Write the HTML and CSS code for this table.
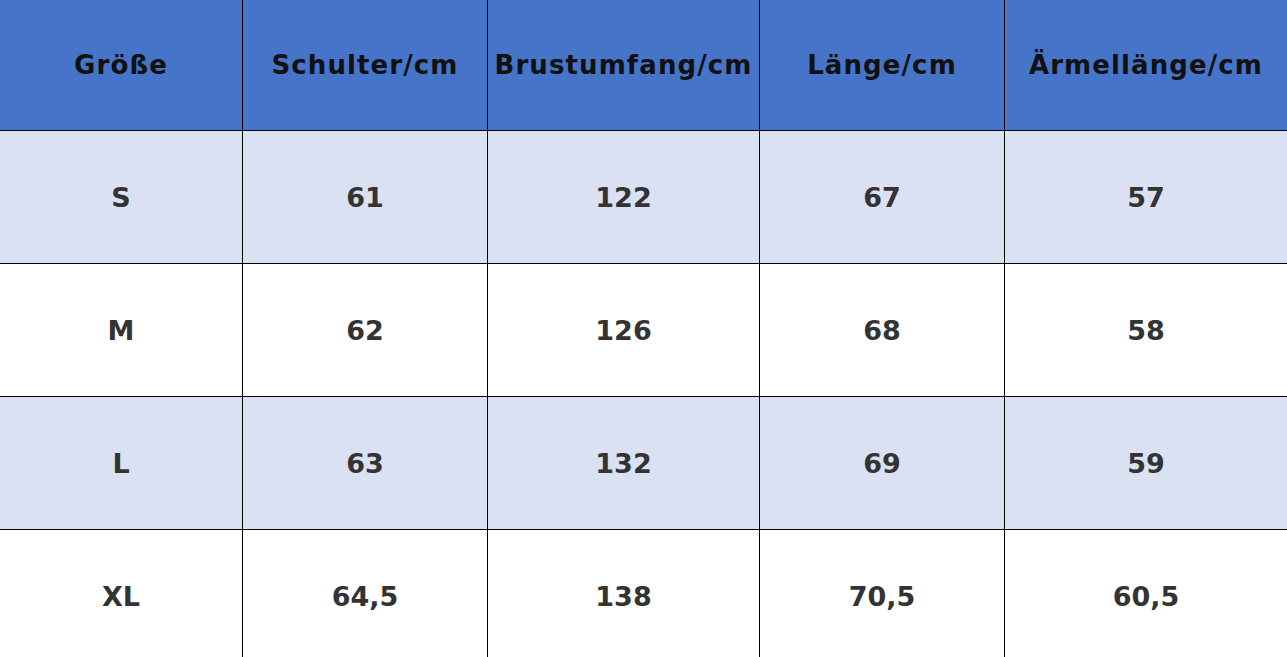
FILE: index.html
```html
<!DOCTYPE html>
<html lang="de">
<head>
<meta charset="utf-8">
<title>Größentabelle</title>
<link rel="stylesheet" href="styles.css">
</head>
<body>
<div class="table">
  <div class="cell head">Größe</div>
  <div class="cell head">Schulter/cm</div>
  <div class="cell head">Brustumfang/cm</div>
  <div class="cell head">Länge/cm</div>
  <div class="cell head">Ärmellänge/cm</div>

  <div class="cell shade">S</div>
  <div class="cell shade">61</div>
  <div class="cell shade">122</div>
  <div class="cell shade">67</div>
  <div class="cell shade">57</div>

  <div class="cell">M</div>
  <div class="cell">62</div>
  <div class="cell">126</div>
  <div class="cell">68</div>
  <div class="cell">58</div>

  <div class="cell shade">L</div>
  <div class="cell shade">63</div>
  <div class="cell shade">132</div>
  <div class="cell shade">69</div>
  <div class="cell shade">59</div>

  <div class="cell">XL</div>
  <div class="cell">64,5</div>
  <div class="cell">138</div>
  <div class="cell">70,5</div>
  <div class="cell">60,5</div>
</div>
</body>
</html>
```
FILE: styles.css
```css
html, body {
  margin: 0;
  padding: 0;
  background: #ffffff;
  overflow: hidden;
}

.table {
  display: grid;
  grid-template-columns: 242px 244px 271px 244px 282px;
  grid-template-rows: 130px repeat(4, 132px);
  gap: 1px;
  background: #000000;
  width: 1287px;
  font-family: "DejaVu Sans", Verdana, sans-serif;
  font-weight: bold;
  font-size: 27px;
}

.cell {
  display: flex;
  align-items: center;
  justify-content: center;
  background: #ffffff;
  color: #333333;
  white-space: nowrap;
}

.cell.head {
  background: #4674c9;
  color: #111111;
  font-size: 26px;
  letter-spacing: 1.1px;
}

.cell.shade {
  background: #d9e1f2;
}
```
